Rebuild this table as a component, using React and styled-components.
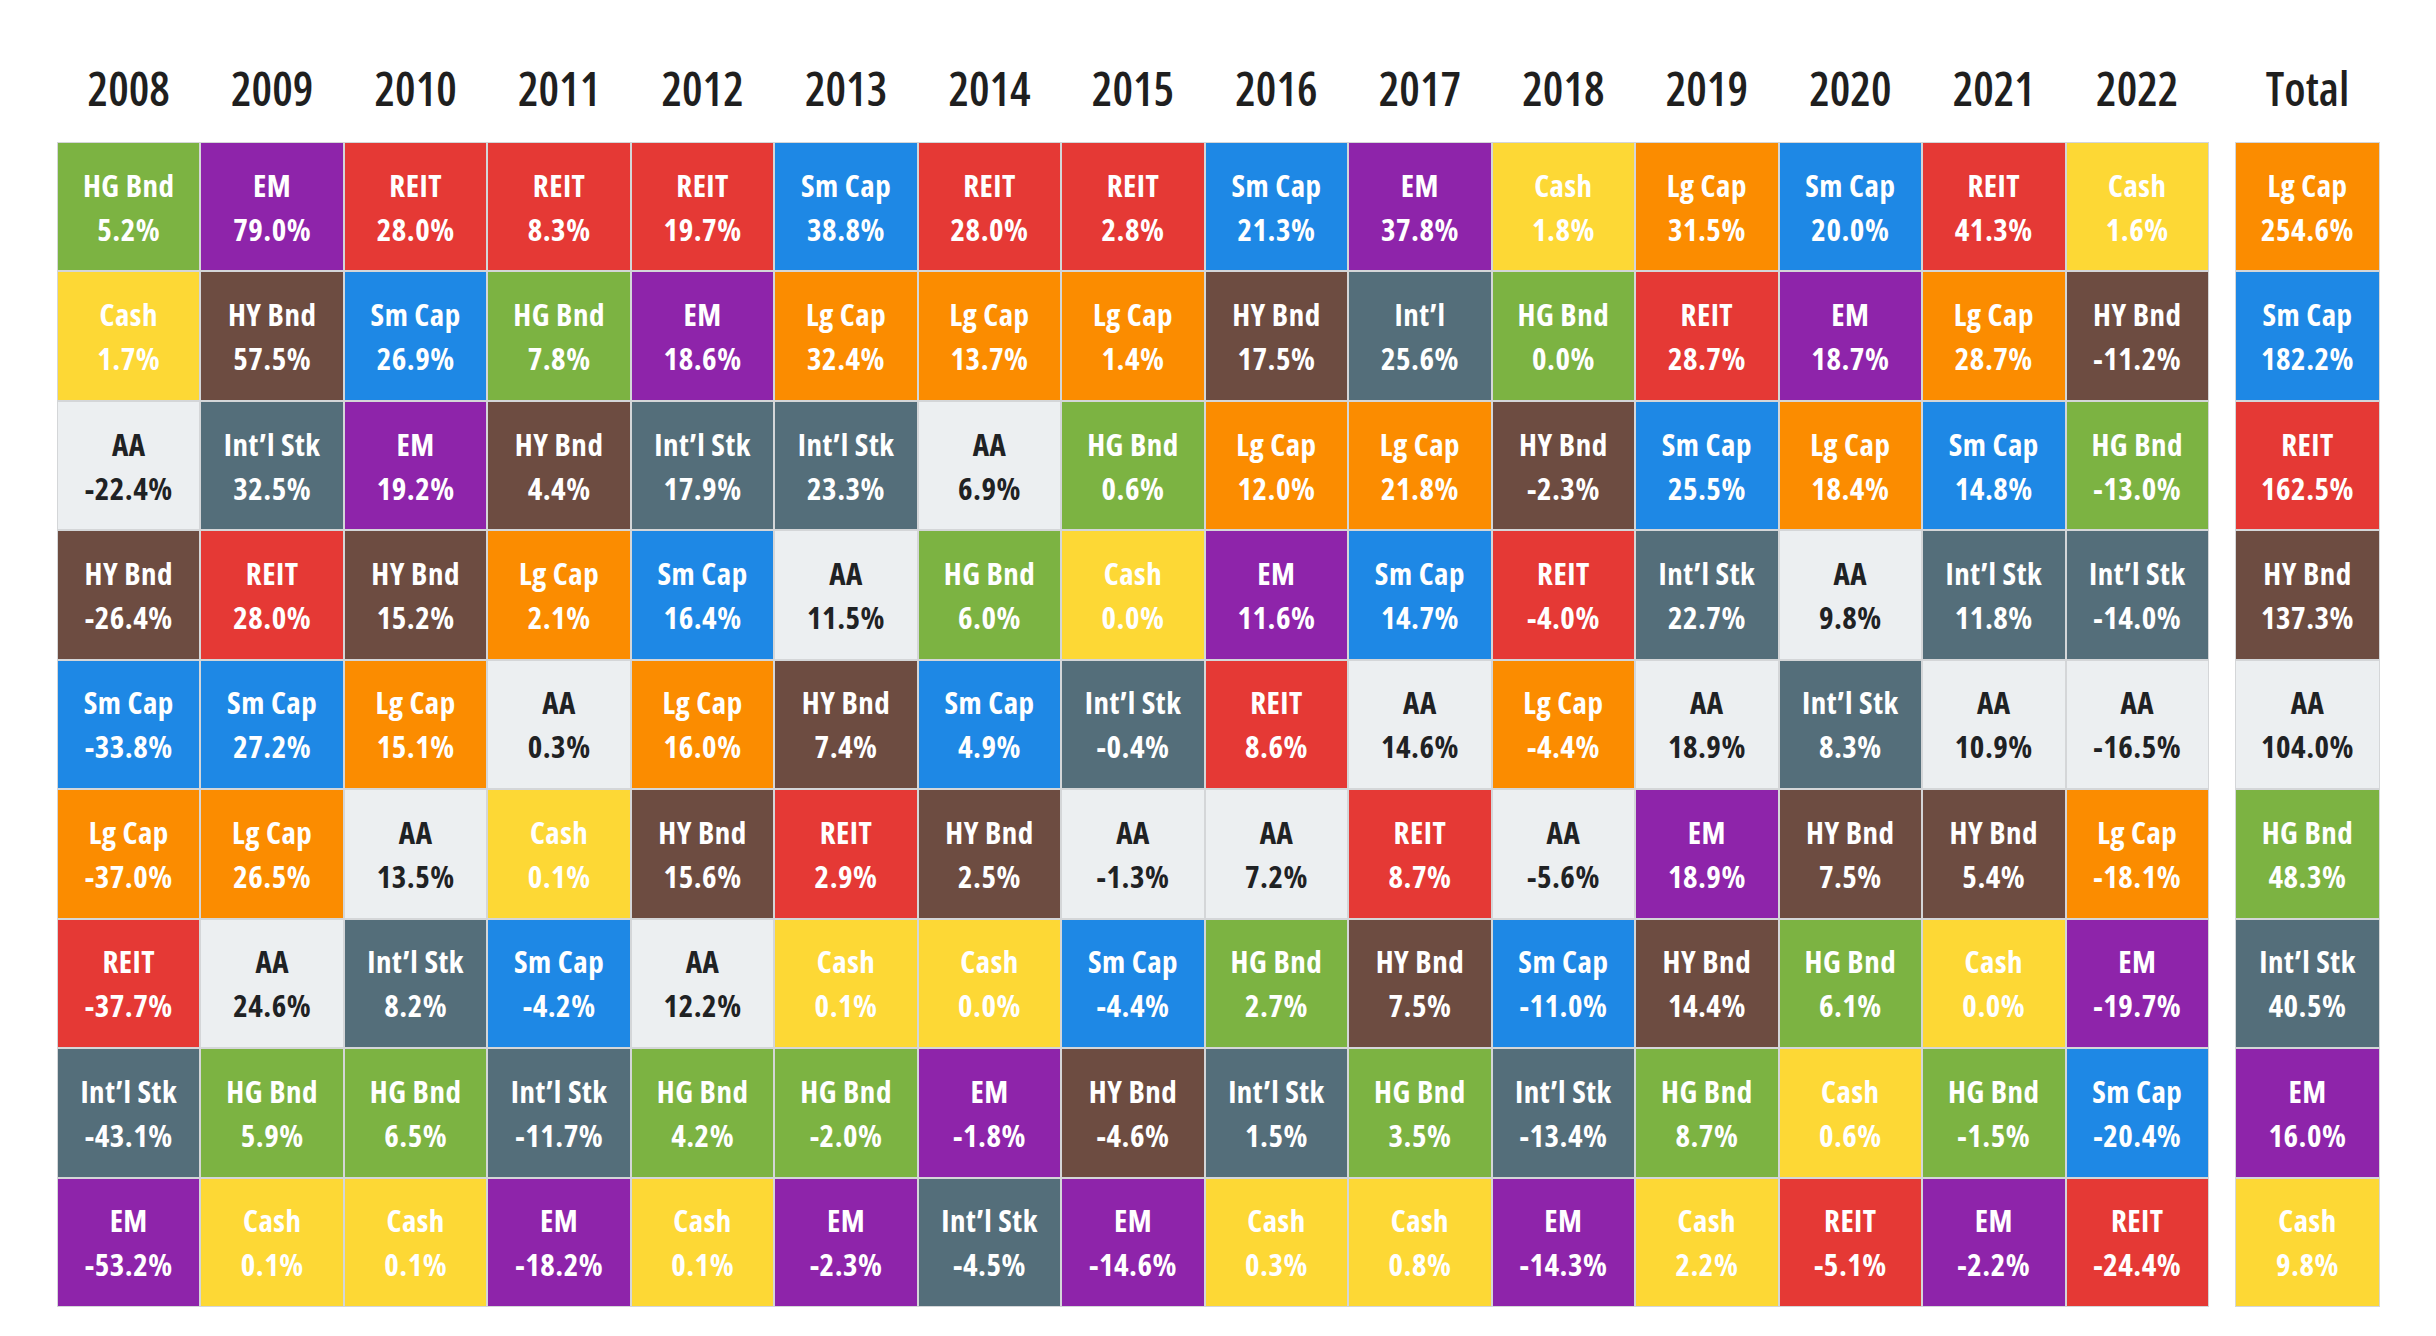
import React from 'react';
import styled, { createGlobalStyle } from 'styled-components';

const GlobalStyle = createGlobalStyle`
  html, body {
    margin: 0;
    padding: 0;
    background: #ffffff;
  }
`;

const COLORS = {
  'HG Bnd': '#7cb342',
  'EM': '#8e24aa',
  'REIT': '#e53935',
  'Sm Cap': '#1e88e5',
  'Cash': '#fdd835',
  'HY Bnd': '#6d4c41',
  'Int’l Stk': '#546e7a',
  'Int’l': '#546e7a',
  'Lg Cap': '#fb8c00',
  'AA': '#eceff1',
};

const years = [
  ['2008', ['HG Bnd', '5.2%'], ['Cash', '1.7%'], ['AA', '-22.4%'], ['HY Bnd', '-26.4%'], ['Sm Cap', '-33.8%'], ['Lg Cap', '-37.0%'], ['REIT', '-37.7%'], ['Int’l Stk', '-43.1%'], ['EM', '-53.2%']],
  ['2009', ['EM', '79.0%'], ['HY Bnd', '57.5%'], ['Int’l Stk', '32.5%'], ['REIT', '28.0%'], ['Sm Cap', '27.2%'], ['Lg Cap', '26.5%'], ['AA', '24.6%'], ['HG Bnd', '5.9%'], ['Cash', '0.1%']],
  ['2010', ['REIT', '28.0%'], ['Sm Cap', '26.9%'], ['EM', '19.2%'], ['HY Bnd', '15.2%'], ['Lg Cap', '15.1%'], ['AA', '13.5%'], ['Int’l Stk', '8.2%'], ['HG Bnd', '6.5%'], ['Cash', '0.1%']],
  ['2011', ['REIT', '8.3%'], ['HG Bnd', '7.8%'], ['HY Bnd', '4.4%'], ['Lg Cap', '2.1%'], ['AA', '0.3%'], ['Cash', '0.1%'], ['Sm Cap', '-4.2%'], ['Int’l Stk', '-11.7%'], ['EM', '-18.2%']],
  ['2012', ['REIT', '19.7%'], ['EM', '18.6%'], ['Int’l Stk', '17.9%'], ['Sm Cap', '16.4%'], ['Lg Cap', '16.0%'], ['HY Bnd', '15.6%'], ['AA', '12.2%'], ['HG Bnd', '4.2%'], ['Cash', '0.1%']],
  ['2013', ['Sm Cap', '38.8%'], ['Lg Cap', '32.4%'], ['Int’l Stk', '23.3%'], ['AA', '11.5%'], ['HY Bnd', '7.4%'], ['REIT', '2.9%'], ['Cash', '0.1%'], ['HG Bnd', '-2.0%'], ['EM', '-2.3%']],
  ['2014', ['REIT', '28.0%'], ['Lg Cap', '13.7%'], ['AA', '6.9%'], ['HG Bnd', '6.0%'], ['Sm Cap', '4.9%'], ['HY Bnd', '2.5%'], ['Cash', '0.0%'], ['EM', '-1.8%'], ['Int’l Stk', '-4.5%']],
  ['2015', ['REIT', '2.8%'], ['Lg Cap', '1.4%'], ['HG Bnd', '0.6%'], ['Cash', '0.0%'], ['Int’l Stk', '-0.4%'], ['AA', '-1.3%'], ['Sm Cap', '-4.4%'], ['HY Bnd', '-4.6%'], ['EM', '-14.6%']],
  ['2016', ['Sm Cap', '21.3%'], ['HY Bnd', '17.5%'], ['Lg Cap', '12.0%'], ['EM', '11.6%'], ['REIT', '8.6%'], ['AA', '7.2%'], ['HG Bnd', '2.7%'], ['Int’l Stk', '1.5%'], ['Cash', '0.3%']],
  ['2017', ['EM', '37.8%'], ['Int’l', '25.6%'], ['Lg Cap', '21.8%'], ['Sm Cap', '14.7%'], ['AA', '14.6%'], ['REIT', '8.7%'], ['HY Bnd', '7.5%'], ['HG Bnd', '3.5%'], ['Cash', '0.8%']],
  ['2018', ['Cash', '1.8%'], ['HG Bnd', '0.0%'], ['HY Bnd', '-2.3%'], ['REIT', '-4.0%'], ['Lg Cap', '-4.4%'], ['AA', '-5.6%'], ['Sm Cap', '-11.0%'], ['Int’l Stk', '-13.4%'], ['EM', '-14.3%']],
  ['2019', ['Lg Cap', '31.5%'], ['REIT', '28.7%'], ['Sm Cap', '25.5%'], ['Int’l Stk', '22.7%'], ['AA', '18.9%'], ['EM', '18.9%'], ['HY Bnd', '14.4%'], ['HG Bnd', '8.7%'], ['Cash', '2.2%']],
  ['2020', ['Sm Cap', '20.0%'], ['EM', '18.7%'], ['Lg Cap', '18.4%'], ['AA', '9.8%'], ['Int’l Stk', '8.3%'], ['HY Bnd', '7.5%'], ['HG Bnd', '6.1%'], ['Cash', '0.6%'], ['REIT', '-5.1%']],
  ['2021', ['REIT', '41.3%'], ['Lg Cap', '28.7%'], ['Sm Cap', '14.8%'], ['Int’l Stk', '11.8%'], ['AA', '10.9%'], ['HY Bnd', '5.4%'], ['Cash', '0.0%'], ['HG Bnd', '-1.5%'], ['EM', '-2.2%']],
  ['2022', ['Cash', '1.6%'], ['HY Bnd', '-11.2%'], ['HG Bnd', '-13.0%'], ['Int’l Stk', '-14.0%'], ['AA', '-16.5%'], ['Lg Cap', '-18.1%'], ['EM', '-19.7%'], ['Sm Cap', '-20.4%'], ['REIT', '-24.4%']],
];

const totals = [
  'Total', ['Lg Cap', '254.6%'], ['Sm Cap', '182.2%'], ['REIT', '162.5%'], ['HY Bnd', '137.3%'], ['AA', '104.0%'], ['HG Bnd', '48.3%'], ['Int’l Stk', '40.5%'], ['EM', '16.0%'], ['Cash', '9.8%'],
];

const Page = styled.div`
  display: flex;
  gap: 26px;
  padding-left: 57px;
  font-family: "Open Sans", "Liberation Sans", sans-serif;
`;

const Section = styled.div`
  display: flex;
  flex-direction: column;
  width: ${(p) => p.$width}px;
`;

const HeaderRow = styled.div`
  display: grid;
  grid-template-columns: repeat(${(p) => p.$cols}, 1fr);
  height: 142px;
  align-items: end;
  padding-bottom: 26px;
  box-sizing: border-box;
`;

const Year = styled.div`
  text-align: center;
  font-size: 46px;
  line-height: 56px;
  font-weight: 600;
  font-stretch: 80%;
  color: #1f1f1f;
`;

const Grid = styled.div`
  display: grid;
  grid-auto-flow: column;
  grid-template-columns: repeat(${(p) => p.$cols}, 1fr);
  grid-template-rows: repeat(9, 1fr);
  gap: 2px;
  padding: 1px;
  height: 1165px;
  box-sizing: border-box;
  background: #d4d6d8;
`;

const Cell = styled.div`
  display: flex;
  flex-direction: column;
  align-items: center;
  justify-content: center;
  background: ${(p) => p.$bg};
  color: ${(p) => (p.$light ? '#1f2224' : '#ffffff')};
  font-size: 31px;
  line-height: 44px;
  font-weight: 700;
  font-stretch: 80%;
  letter-spacing: 0.5px;
  white-space: nowrap;
`;

const Label = styled.span`
  display: block;
`;

function Column({ cells }) {
  return cells.map(([name, value], i) => (
    <Cell key={i} $bg={COLORS[name]} $light={name === 'AA'}>
      <Label>{name}</Label>
      <Label>{value}</Label>
    </Cell>
  ));
}

export default function App() {
  return (
    <>
      <GlobalStyle />
      <Page>
        <Section $width={2152}>
          <HeaderRow $cols={15}>
            {years.map(([year]) => (
              <Year key={year}>{year}</Year>
            ))}
          </HeaderRow>
          <Grid $cols={15}>
            {years.map(([year, ...cells]) => (
              <Column key={year} cells={cells} />
            ))}
          </Grid>
        </Section>
        <Section $width={145}>
          <HeaderRow $cols={1}>
            <Year>{totals[0]}</Year>
          </HeaderRow>
          <Grid $cols={1}>
            <Column cells={totals.slice(1)} />
          </Grid>
        </Section>
      </Page>
    </>
  );
}
